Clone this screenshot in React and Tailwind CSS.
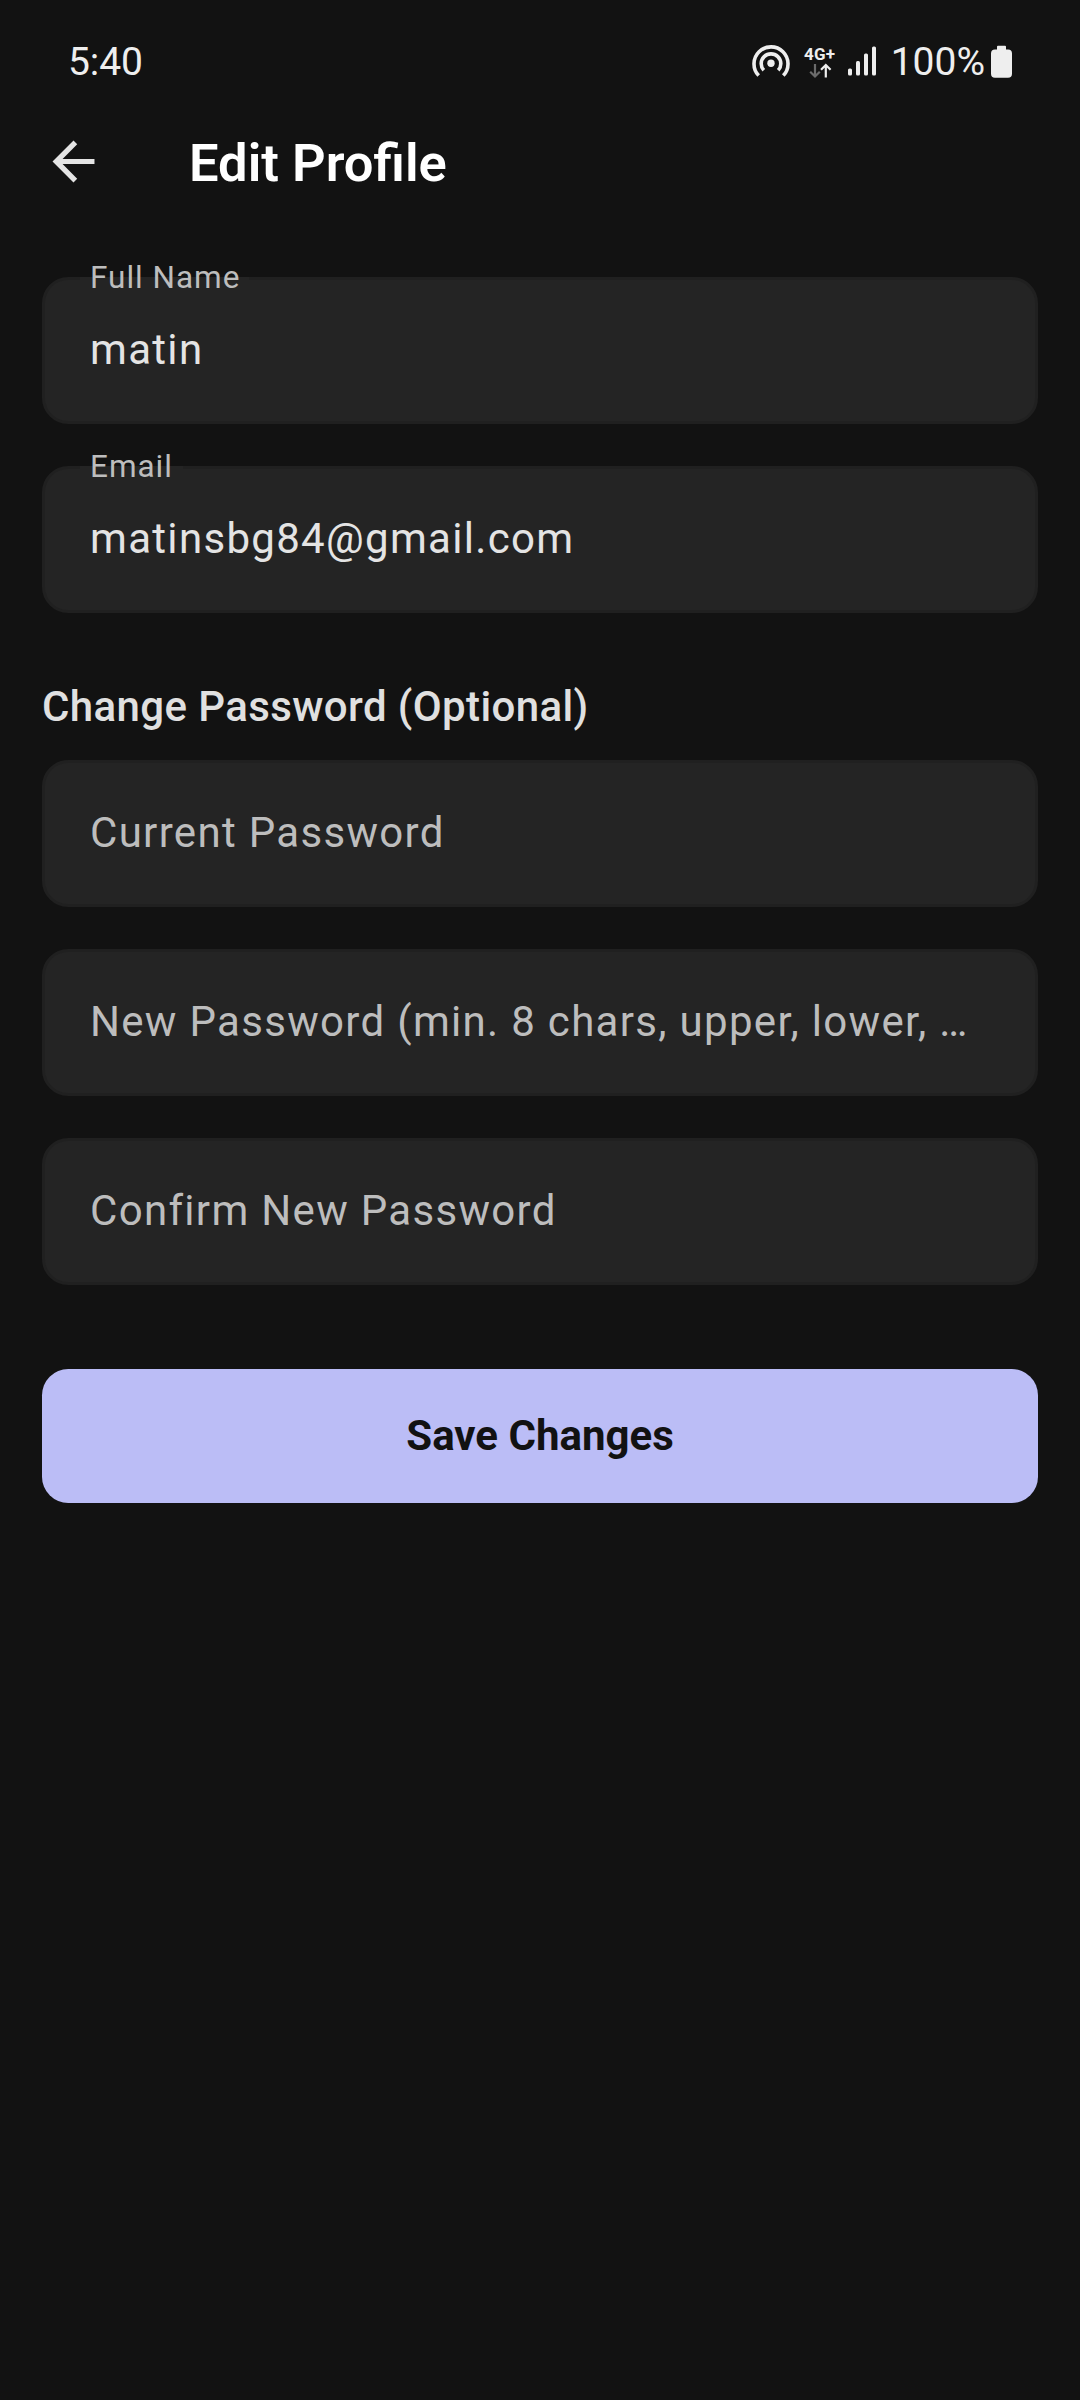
const fields = {
  name: { label: "Full Name", value: "matin", gap: "w-[169px]" },
  email: { label: "Email", value: "matinsbg84@gmail.com", gap: "w-[103px]" },
};

function FilledField({ label, value, gap }) {
  return (
    <div className="relative h-[147px] rounded-[26.25px] border-[3px] border-[#202020] bg-[#242424] pl-[45px] pt-[45px]">
      <span className={`absolute left-[35px] -top-[3px] h-[3px] bg-[#242424] ${gap}`} />
      <span className="absolute left-[45px] -top-[21px] whitespace-nowrap text-[31.5px] leading-[38px] tracking-[0.98px] text-[#bdbdbd]">
        {label}
      </span>
      <div className="text-[42px] leading-[50px] tracking-[1.3125px] text-[#e4e4e4]">{value}</div>
    </div>
  );
}

function EmptyField({ label }) {
  return (
    <div className="h-[147px] whitespace-nowrap rounded-[26.25px] border-[3px] border-[#202020] bg-[#242424] pl-[45px] pt-[45px] text-[42px] leading-[50px] tracking-[1.3125px] text-[#bdbdbd]">
      {label}
    </div>
  );
}

function StatusBar() {
  return (
    <div className="flex h-[122px] items-start justify-between px-[68px] pt-[38px] text-[39px] leading-[46px] text-[#eeeeee]">
      <span className="mt-px tracking-[-0.1px]">5:40</span>
      <div className="flex">
        <svg className="mt-[5px] h-[36px] w-[40px]" viewBox="0 0 40 36" fill="none" stroke="#eee" strokeWidth="3.6">
          <path d="M7.7 32.6A17 17 0 1 1 32.3 32.6" />
          <path d="M12.8 27.3A9.8 9.8 0 1 1 27.2 27.3" />
          <circle cx="20" cy="20.3" r="3.7" fill="#eee" stroke="none" />
        </svg>
        <div className="ml-[13px] flex w-[32px] flex-col items-center">
          <span className="mt-[7px] text-[17px] font-bold leading-[18px] tracking-[0.2px]">4G+</span>
          <svg className="h-[16px] w-[24px]" viewBox="0 0 24 16" fill="none" strokeWidth="2.2">
            <path d="M7 1V13.5M2.2 8.7L7 13.5L11.8 8.7" stroke="#6b6b6b" />
            <path d="M17.8 14.5V2M13 6.8L17.8 2L22.6 6.8" stroke="#eee" />
          </svg>
        </div>
        <svg className="ml-[12px] mt-[8px] h-[30px] w-[28px]" viewBox="0 0 28 30" fill="#eee">
          <rect x="0" y="22.5" width="4" height="7" rx="1.5" />
          <rect x="8" y="15" width="4" height="14.5" rx="1.5" />
          <rect x="16" y="7.5" width="4" height="22" rx="1.5" />
          <rect x="24" y="0.5" width="4" height="29" rx="1.5" />
        </svg>
        <span className="ml-[15px] mt-px">100%</span>
        <svg className="ml-[6px] mt-[7px] h-[33px] w-[21px]" viewBox="0 0 21 33" fill="#eee">
          <path d="M7 0.8H14Q15 .8 15 1.8V4.5H17Q21 4.5 21 8.5V28.7Q21 32.7 17 32.7H4Q0 32.7 0 28.7V8.5Q0 4.5 4 4.5H6V1.8Q6 .8 7 .8Z" />
        </svg>
      </div>
    </div>
  );
}

export default function App() {
  return (
    <div className="h-[2400px] w-[1080px] overflow-hidden bg-[#121212] font-['Roboto',sans-serif]">
      <StatusBar />
      <header className="flex h-[155px] items-start pl-[52px]">
        <svg className="mt-[18px] h-[43px] w-[43px]" viewBox="-0.2 -0.2 16.4 16.4" fill="#e4e4e4">
          <path d="M16 7H3.83l5.59-5.59L8 0 0 8l8 8 1.41-1.41L3.83 9H16V7z" />
        </svg>
        <h1 className="ml-[94px] mt-[10px] text-[52.5px] font-semibold leading-[62px] text-white">Edit Profile</h1>
      </header>
      <main className="flex flex-col px-[42px]">
        <div className="flex flex-col gap-[42px]">
          <FilledField {...fields.name} />
          <FilledField {...fields.email} />
        </div>
        <h2 className="mb-[28px] mt-[68px] text-[42px] font-medium leading-[51px] tracking-[0.39px] text-[#e0e0e0]">
          Change Password (Optional)
        </h2>
        <div className="flex flex-col gap-[42px]">
          <EmptyField label="Current Password" />
          <EmptyField label="New Password (min. 8 chars, upper, lower, …" />
          <EmptyField label="Confirm New Password" />
        </div>
        <button className="mt-[84px] flex h-[134px] items-center justify-center rounded-[26.25px] bg-[#bbbdf6] text-[42px] font-bold leading-[50px] text-[#121212]">
          Save Changes
        </button>
      </main>
    </div>
  );
}
